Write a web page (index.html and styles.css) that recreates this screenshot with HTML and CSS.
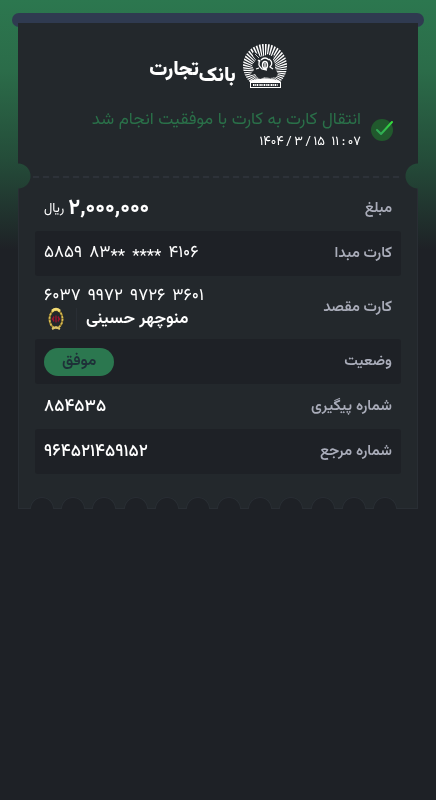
FILE: index.html
```html
<!DOCTYPE html>
<html lang="fa" dir="rtl">
<head>
<meta charset="utf-8">
<meta name="viewport" content="width=device-width, initial-scale=1">
<title>رسید انتقال کارت به کارت</title>
<link rel="stylesheet" href="styles.css">
</head>
<body>
<main class="receipt">
  <div class="slot"></div>
  <header class="head">
    <div class="brand">
      <svg class="emblem" viewBox="0 0 44 44" aria-hidden="true">
        <defs><clipPath id="disc"><path d="M7 38A22 22 0 1 1 37 38Z"/></clipPath></defs>
        <g clip-path="url(#disc)">
          <circle cx="22" cy="27" r="15" fill="none" stroke="#fff" stroke-width="30" pathLength="104" stroke-dasharray="1.1 0.9"/>
          <path d="M6 37q16-5 32 0v2H6z" fill="#fff"/>
        </g>
        <path d="M10 8l5 2 2 3 4-1 4-2 3 2 3-1-1 5 2 4v4l3 6-2 3-6 1-5-1-5 2-3-2-2-3-5 1 4-5-2-5 4-5-3-4z" fill="#23282c"/>
        <g fill="none" stroke="#fff">
          <ellipse cx="22" cy="21" rx="2.5" ry="3.5" stroke-width="1.4"/>
          <path d="M17 16q-3 5 2 9l5 1M26 15q5 4 1 8l3 2M18 16q4-4 8 0M22 19v5M17 18l-2-2M16 24l-3 1" stroke-width="1.3"/>
          <path d="M12 10l4 4" stroke-width=".7"/>
        </g>
        <rect x="7.5" y="38.5" width="30" height="5" fill="#23282c" stroke="#fff"/>
        <path d="M10 41h25" stroke="#fff" stroke-width="2" stroke-dasharray="1.5 .7 .8 .6"/>
      </svg>
      <div class="wordmark"><span class="bank-word">بانک</span><span>تجارت</span></div>
    </div>
    <div class="result">
      <svg class="tick" viewBox="0 0 24 24" aria-hidden="true">
        <defs><linearGradient id="g" x1="0" y1="1" x2="1" y2="0"><stop offset="0" stop-color="#2fa05a"/><stop offset="1" stop-color="#35e03c"/></linearGradient></defs>
        <circle cx="12" cy="12" r="11" fill="#21592d"/>
        <path d="M7 12l4 4L22 4" fill="none" stroke="url(#g)" stroke-width="2" stroke-linecap="round" stroke-linejoin="round"/>
      </svg>
      <div>
        <h1 class="title">انتقال کارت به کارت با موفقیت انجام شد</h1>
        <time class="date" dir="ltr">۱۴۰۴&thinsp;/&thinsp;۳&thinsp;/&thinsp;۱۵&ensp;۱۱&thinsp;:&thinsp;۰۷</time>
      </div>
    </div>
  </header>
  <section class="body">
    <dl class="rows">
      <div class="row"><dt>مبلغ</dt><dd class="amount"><b>۲,۰۰۰,۰۰۰</b><small>ریال</small></dd></div>
      <div class="row"><dt>کارت مبدا</dt><dd class="pan" dir="ltr"><span>۵۸۵۹</span><span>۸۳<small>**</small></span><span><small>****</small></span><span>۴۱۰۶</span></dd></div>
      <div class="row tall"><dt>کارت مقصد</dt><dd>
        <div class="pan" dir="ltr"><span>۶۰۳۷</span><span>۹۹۷۲</span><span>۹۷۲۶</span><span>۳۶۰۱</span></div>
        <div class="owner"><b>منوچهر حسینی</b>
          <svg class="bank" viewBox="0 0 16 24" aria-hidden="true">
            <ellipse cx="8" cy="12" rx="6.5" ry="9" fill="none" stroke="#8e762c" stroke-width="2"/>
            <ellipse cx="8" cy="12" rx="6.5" ry="9" fill="none" stroke="#d9be55" stroke-width="1.6" stroke-dasharray="2 1.5"/>
            <path d="M4 4q4-4 8 0" fill="none" stroke="#f3dc74" stroke-width="2.5"/>
            <path d="M4 22l4-2 4 2" fill="none" stroke="#d8c26b" stroke-width="2"/>
            <path d="M8 8.500v7M6 9.500q-2 2.500 0 5M10 9.500q2 2.500 0 5M4.500 11v2M11.500 11v2" fill="none" stroke="#a01230" stroke-width="1.3"/>
          </svg>
        </div></dd></div>
      <div class="row"><dt>وضعیت</dt><dd><span class="status">موفق</span></dd></div>
      <div class="row"><dt>شماره پیگیری</dt><dd class="code">۸۵۴۵۳۵</dd></div>
      <div class="row"><dt>شماره مرجع</dt><dd class="code">۹۶۴۵۲۱۴۵۹۱۵۲</dd></div>
    </dl>
    <div class="teeth"><i></i><i></i><i></i><i></i><i></i><i></i><i></i><i></i><i></i><i></i><i></i><i></i></div>
  </section>
</main>
</body>
</html>
```

FILE: styles.css
```css
* { box-sizing: border-box; }
body {
  margin: 0;
  min-height: 100vh;
  padding: 13px 12px;
  background: linear-gradient(#2c774f 0, #2b6c49 70px, #244c39 160px, #1e2126 250px) no-repeat #1e2126;
  font-family: Vazirmatn, "Noto Sans Arabic", "DejaVu Sans", sans-serif;
  font-size: 17px;
  color: #fff;
}
.slot { height: 14px; border-radius: 7px; background: #2f3a50; }
.head, .body { margin: 0 6px; background: #23282c; mask-composite: intersect; }
.head {
  position: relative;
  margin-top: -4px;
  padding: 21px 24px 24px;
  mask-image: radial-gradient(circle at 0 100%, transparent 12px, #000 13px), radial-gradient(circle at 100% 100%, transparent 12px, #000 13px);
}
.body {
  border: solid #292e34;
  border-width: 0 1px;
  mask-image: radial-gradient(circle at 0 0, transparent 12px, #000 13px), radial-gradient(circle at 100% 0, transparent 12px, #000 13px);
}
.body::before {
  content: "";
  display: block;
  height: 2px;
  margin: 0 14px;
  background: repeating-linear-gradient(90deg, #2d3239 0 6px, transparent 6px 10px);
}
.brand { display: flex; justify-content: center; align-items: flex-end; gap: 7px; height: 44px; }
.emblem { width: 44px; height: 44px; }
.wordmark { display: flex; align-items: flex-start; font-size: 20px; font-weight: 900; line-height: 24px; }
.bank-word { padding-top: 6px; }
.result { display: flex; align-items: center; gap: 9px; margin-top: 20px; }
.tick { width: 24px; height: 24px; flex: none; }
.title { margin: 0; font-size: 17px; font-weight: 400; line-height: 24px; color: #2a7049; white-space: nowrap; }
.date { display: block; font-size: 13px; line-height: 20px; text-align: right; }
.rows { margin: 0 16px; padding-top: 8px; }
.row { display: flex; align-items: center; justify-content: space-between; min-height: 45px; padding: 0 9px; border-radius: 3px; }
.row:nth-child(even) { background: #1e2126; }
.row.tall { min-height: 63px; }
dt { color: #a9acb9; font-size: 15px; font-weight: 600; }
dd { margin: 0; line-height: 22px; }
.amount { display: flex; align-items: center; gap: 4px; }
.amount b { font-size: 22px; }
.amount small { font-size: 13px; }
.pan { display: flex; gap: 7px; }
.pan small { font-size: 17px; line-height: 1; vertical-align: -4px; }
.owner { display: flex; align-items: center; justify-content: flex-end; gap: 8px; padding: 0 4px; }
.owner b { margin-right: auto; padding: 0 4px 0 9px; border-left: 1px solid #292e34; font-size: 17px; font-weight: 600; }
.bank { width: 16px; height: 24px; margin-right: 4px; }
.code { font-weight: 500; }
.status { display: block; padding: 0 18px; border-radius: 14px; background: #2b774f; color: #1e3038; font-size: 16px; font-weight: 600; line-height: 28px; }
.teeth { display: flex; justify-content: space-between; margin-top: 23px; padding: 0 20px 0 11px; border-bottom: 1px solid #292e34; }
.teeth i { width: 24px; height: 12px; margin-bottom: -1px; border: 1px solid #292e34; border-bottom: 0; border-radius: 12px 12px 0 0; background: #1e2126; }
```
